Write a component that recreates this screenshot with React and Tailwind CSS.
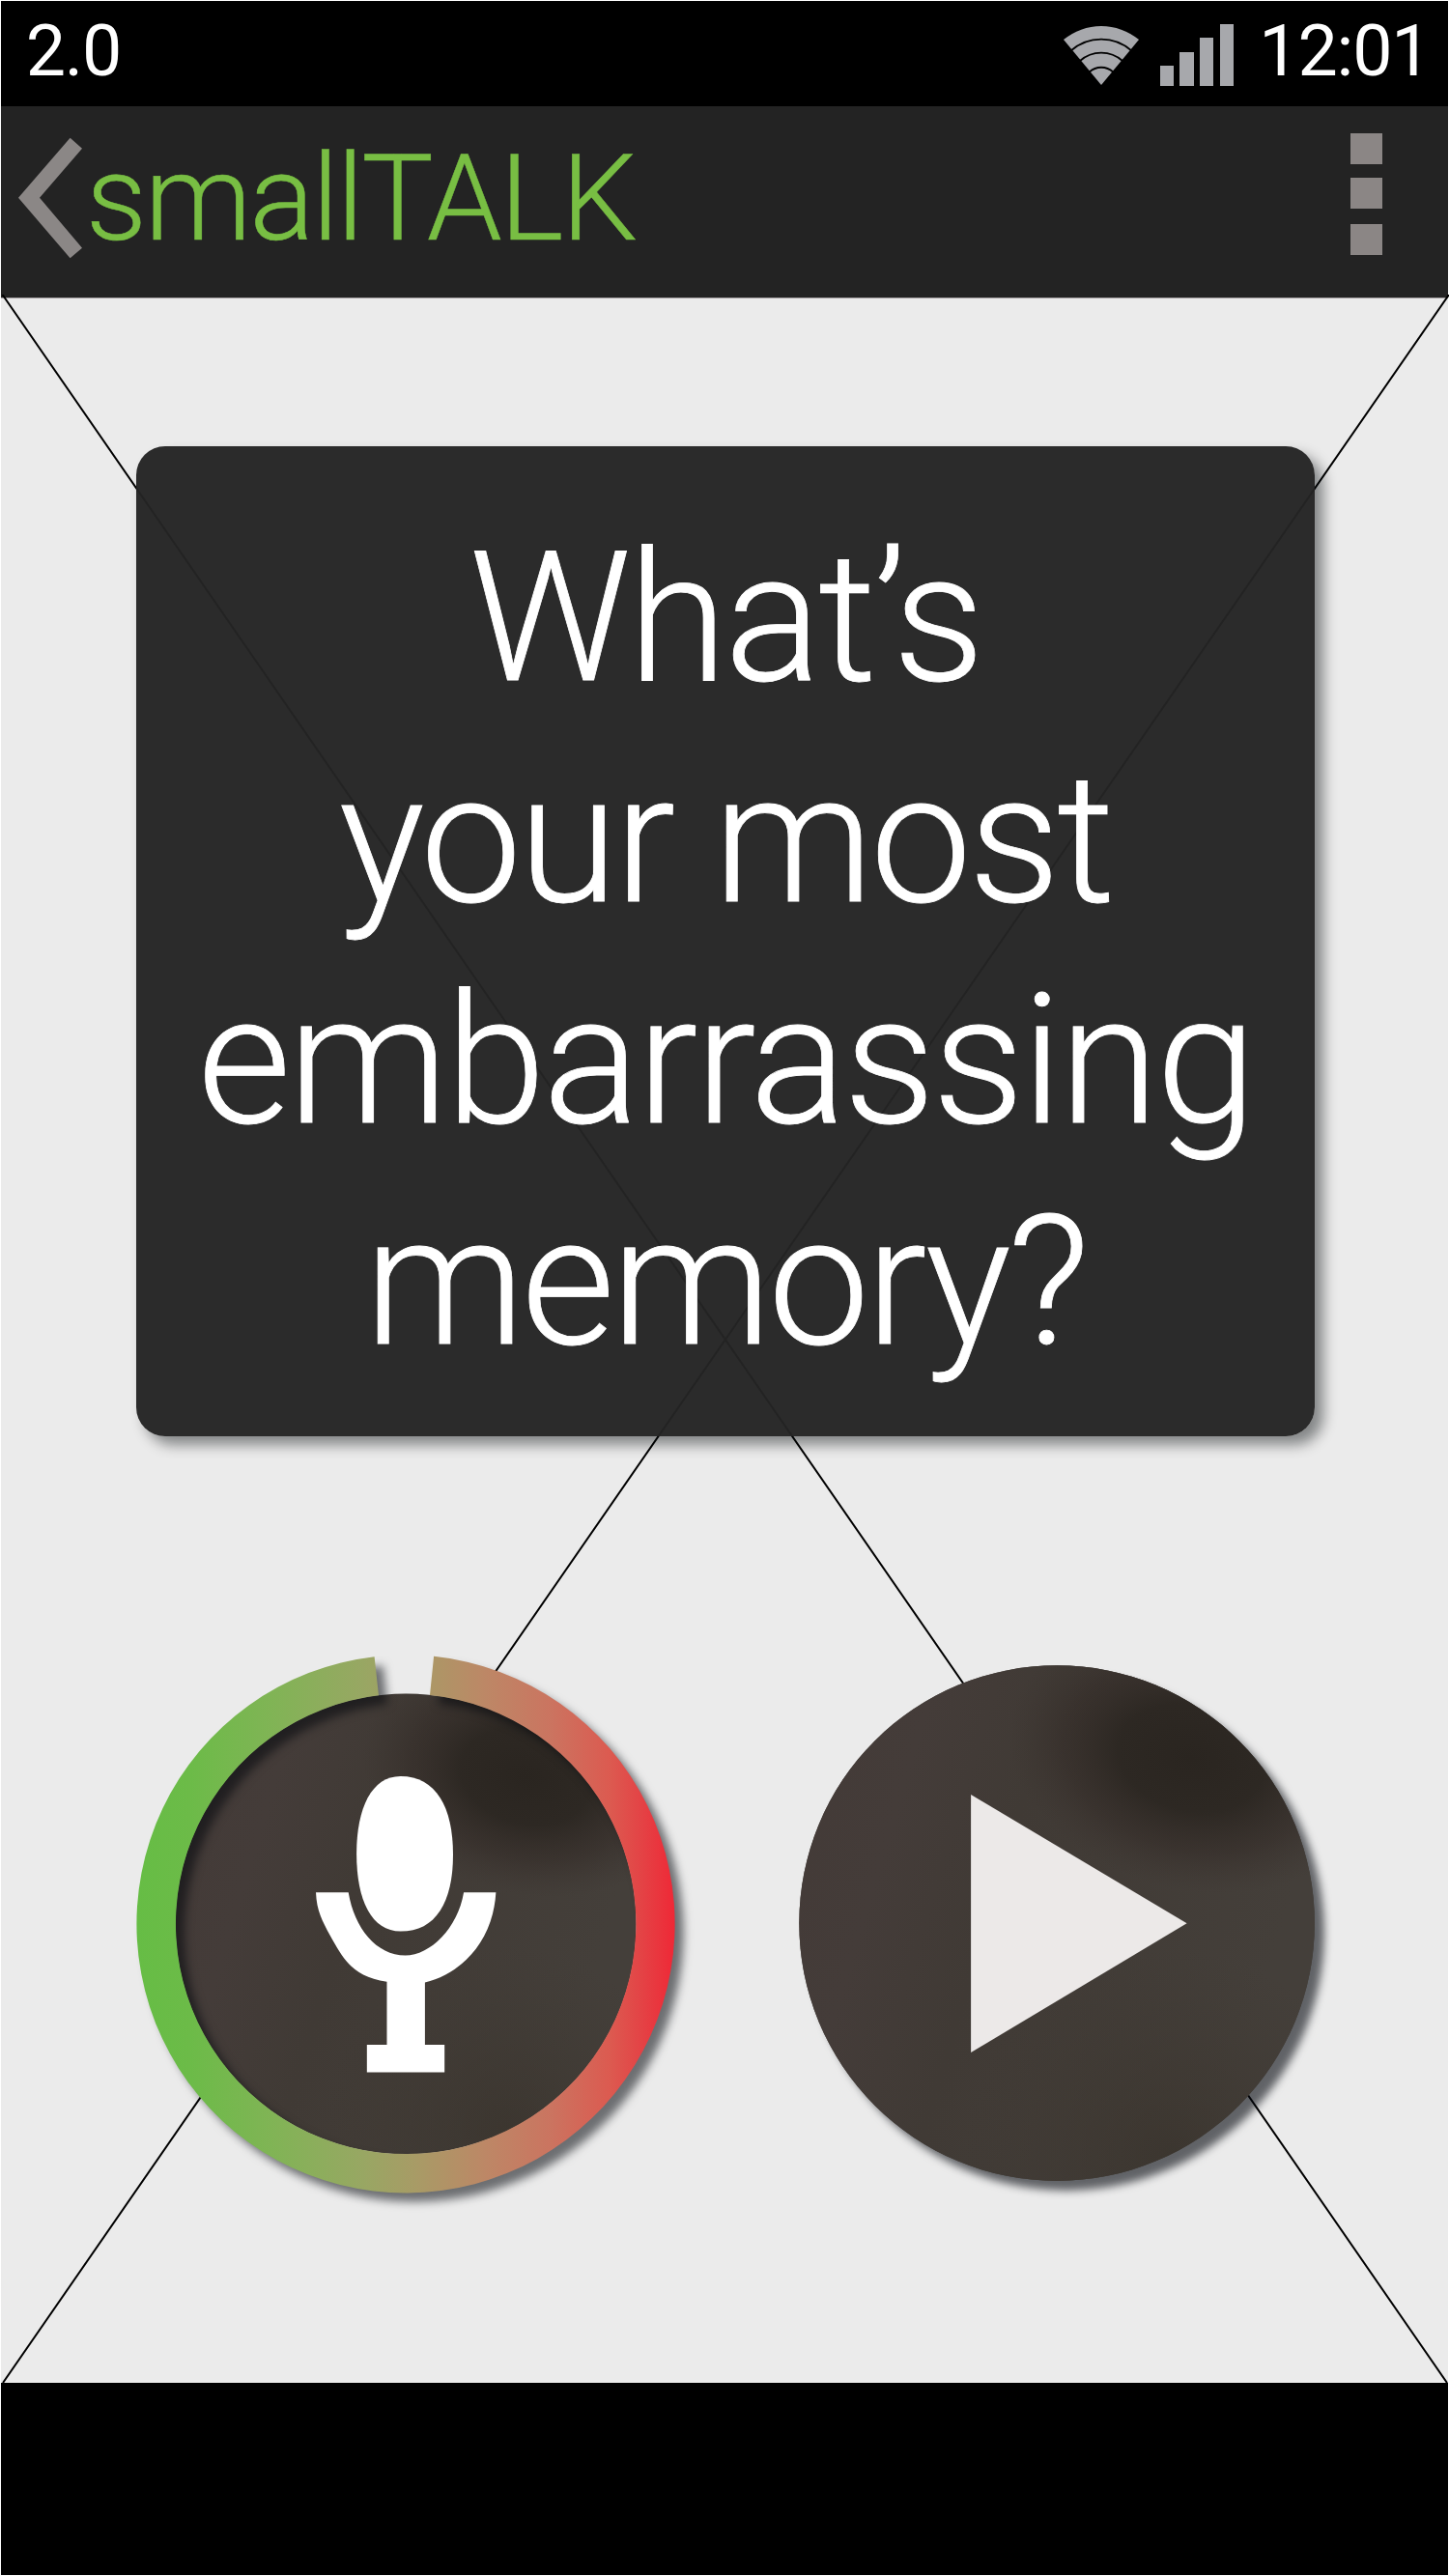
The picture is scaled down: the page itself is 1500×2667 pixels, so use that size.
const LINES = [
  { text: 'What’s', cls: 'tracking-[-3px]' },
  { text: 'your most', cls: 'tracking-[-3.2px]' },
  { text: 'embarrassing', cls: 'tracking-[-2.84px]' },
  { text: 'memory?', cls: 'tracking-[-3.5px]' },
];

function WifiIcon() {
  return (
    <svg className="block h-[63px] w-[78px]" viewBox="0 0 78 63" fill="none">
      <path d="M39 62 L0 15 A61.5 61.5 0 0 1 78 15 Z" fill="#a7a8ac" />
      <g stroke="#000" strokeWidth="1.8">
        <path d="M7.6 26.5 A47.5 47.5 0 0 1 70.4 26.5" />
        <path d="M17 37 A33 33 0 0 1 61 37" />
        <path d="M26.8 48.5 A18 18 0 0 1 51.2 48.5" />
      </g>
    </svg>
  );
}

function SignalBars() {
  return (
    <div className="flex items-end gap-[6.4px]">
      <div className="h-[21.5px] w-[14.3px] bg-[#a7a8ac]" />
      <div className="h-[35px] w-[14.3px] bg-[#a7a8ac]" />
      <div className="h-[50px] w-[14.3px] bg-[#a7a8ac]" />
      <div className="h-[64px] w-[14.3px] bg-[#a7a8ac]" />
    </div>
  );
}

function StatusBar() {
  return (
    <div className="flex h-[109px] items-start justify-between bg-black pl-[25.7px] pr-[18.6px] text-[73.5px] leading-[86px] tracking-[-1.18px] text-white">
      <span className="mt-[9px]">2.0</span>
      <div className="flex items-start">
        <div className="mt-[25px] mr-[22px]"><WifiIcon /></div>
        <div className="mt-[24px] mr-[26.3px]"><SignalBars /></div>
        <span className="mt-[9px]">12:01</span>
      </div>
    </div>
  );
}

function AppBar() {
  return (
    <header className="flex h-[199px] items-start justify-between border-b border-[#a39fa1] bg-[#232323] pl-[18px] pr-[68px]">
      <div className="flex items-start">
        <svg className="mt-[32px] block h-[126px] w-[67px]" viewBox="0 0 67 126">
          <path d="M0 62.7 L53.6 .7 L66 11.7 L22 62.7 L66 114.7 L53.6 125.3 Z" fill="#8b8786" />
        </svg>
        <h1 className="mt-[22px] ml-[2.7px] text-[125px] leading-[147px] font-light tracking-[-2.37px] text-[#78be43] [-webkit-text-stroke:0.5px_#78be43]">smallTALK</h1>
      </div>
      <div className="mt-[28px] flex flex-col gap-[13.7px]">
        <div className="h-[32.3px] w-[33px] bg-[#8b8685]" />
        <div className="h-[32.3px] w-[33px] bg-[#8b8685]" />
        <div className="mt-[2px] h-[32.3px] w-[33px] bg-[#8b8685]" />
      </div>
    </header>
  );
}

function Texture({ id }) {
  return (
    <defs>
      <linearGradient id={id + 'base'} x1="0" y1="0" x2="1" y2="0.3">
        <stop offset="0" stopColor="#433a37" />
        <stop offset=".25" stopColor="#443c39" />
        <stop offset=".47" stopColor="#403a35" />
        <stop offset="1" stopColor="#443f3a" />
      </linearGradient>
      <radialGradient id={id + 'dark'} cx=".76" cy=".18" r=".3" gradientTransform="translate(.76 .18) rotate(14) scale(1.2 .85) translate(-.76 -.18)">
        <stop offset="0" stopColor="#2a2520" />
        <stop offset=".4" stopColor="#2c2722" stopOpacity=".95" />
        <stop offset=".7" stopColor="#332b27" stopOpacity=".55" />
        <stop offset="1" stopColor="#3b332f" stopOpacity="0" />
      </radialGradient>
      <radialGradient id={id + 'low'} cx=".72" cy=".95" r=".4">
        <stop offset="0" stopColor="#38322b" stopOpacity=".7" />
        <stop offset="1" stopColor="#3d3730" stopOpacity="0" />
      </radialGradient>
    </defs>
  );
}

function MicButton() {
  return (
    <svg className="block h-[620px] w-[600px] overflow-visible" viewBox="120 1690 600 620">
      <Texture id="mic" />
      <defs>
        <linearGradient id="ring" gradientUnits="userSpaceOnUse" x1="141.4" y1="0" x2="698.6" y2="0">
          <stop offset="0" stopColor="#66bd45" />
          <stop offset=".1" stopColor="#6cbb48" />
          <stop offset=".25" stopColor="#80b455" />
          <stop offset=".42" stopColor="#98a763" />
          <stop offset=".52" stopColor="#a89b66" />
          <stop offset=".65" stopColor="#bd8766" />
          <stop offset=".77" stopColor="#cb7460" />
          <stop offset=".88" stopColor="#dc5a50" />
          <stop offset=".94" stopColor="#e44245" />
          <stop offset="1" stopColor="#ef2836" />
        </linearGradient>
        <filter id="ringShadow" x="-10%" y="-10%" width="125%" height="125%" colorInterpolationFilters="sRGB">
          <feDropShadow dx="9" dy="9" stdDeviation="5" floodColor="#03070d" floodOpacity=".55" />
        </filter>
      </defs>
      <circle cx="420.2" cy="1991.9" r="238.5" fill="url(#micbase)" />
      <circle cx="420.2" cy="1991.9" r="238.5" fill="url(#micdark)" />
      <circle cx="420.2" cy="1991.9" r="238.5" fill="url(#miclow)" />
      <path
        filter="url(#ringShadow)"
        fill="url(#ring)"
        d="M387.6 1715.19 A278.6 278.6 0 1 0 449.1 1714.82 L445 1755 A238.2 238.2 0 1 1 392 1755.37 Z"
      />
      <g fill="#fff" transform="translate(120 1690) scale(.38266 .39541)">
        <path d="M770 377 C692 377 651 460 651 580 C651 703 692 783 770 783 C866 783 912 705 912 582 C912 458 866 377 770 377 Z" />
        <path d="M541 681 H629 C645 775 705 846 783 846 C850 846 925 775 941 681 H1028 C1020 810 935 893 836 917 V1080 H889 V1152 H679 V1080 H733 V915 C640 902 615 855 580 795 C558 755 543 730 541 681 Z" />
      </g>
    </svg>
  );
}

function PlayButton() {
  return (
    <svg className="block h-[620px] w-[600px] overflow-visible" viewBox="800 1690 600 620">
      <Texture id="play" />
      <defs>
        <filter id="playShadow" x="-10%" y="-10%" width="125%" height="125%" colorInterpolationFilters="sRGB">
          <feDropShadow dx="10" dy="10" stdDeviation="4.5" floodColor="#03070d" floodOpacity=".6" />
        </filter>
      </defs>
      <circle cx="1094.1" cy="1991.1" r="266.8" fill="#433f39" filter="url(#playShadow)" />
      <circle cx="1094.1" cy="1991.1" r="266.8" fill="url(#playbase)" />
      <circle cx="1094.1" cy="1991.1" r="266.8" fill="url(#playdark)" />
      <circle cx="1094.1" cy="1991.1" r="266.8" fill="url(#playlow)" />
      <path d="M1005.1 1858 L1228.6 1991.3 L1005.1 2125 Z" fill="#ece9e8" />
    </svg>
  );
}

export default function App() {
  return (
    <div className="flex h-[2667px] w-[1500px] flex-col bg-white px-px pt-px font-['Roboto',sans-serif]">
      <StatusBar />
      <AppBar />
      <main className="relative flex h-[2158px] flex-col bg-[#ebebeb]">
        <svg className="absolute -top-[4px] -left-px block h-[2162px] w-[1500px]" viewBox="0 305 1500 2162" fill="none">
          <path d="M2.5 305 L1498 2467 M1500 305 L3 2467" stroke="#000" strokeWidth="2" />
        </svg>
        <section className="relative mt-[153px] ml-[140px] h-[1025px] w-[1220px] rounded-[30px] bg-[#242424]/97 pt-[64px] text-center text-[187px] leading-[229px] font-light text-white shadow-[9px_9px_14px_rgba(3,6,10,0.44)] [-webkit-text-stroke:0.8px_#fff]">
          {LINES.map((l) => (
            <p key={l.text} className={l.cls}>{l.text}</p>
          ))}
        </section>
        <div className="relative mt-[203px] ml-[119px] flex gap-[80px]">
          <MicButton />
          <PlayButton />
        </div>
      </main>
      <footer className="h-[199px] bg-black" />
    </div>
  );
}
